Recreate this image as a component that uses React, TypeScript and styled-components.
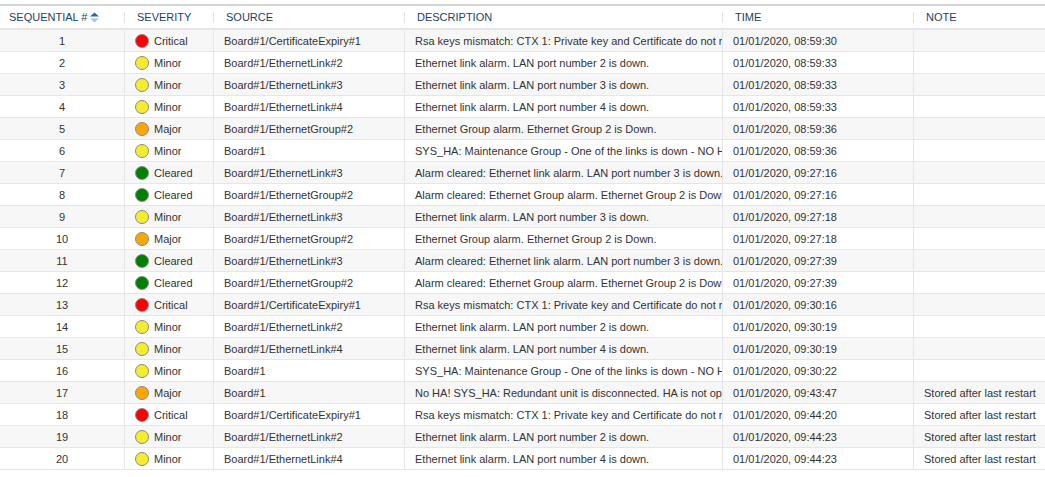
import React from "react";
import styled, { createGlobalStyle } from "styled-components";

const Global = createGlobalStyle`
  html, body { margin: 0; padding: 0; background: #fff; }
  body { font-family: "Liberation Sans", Arial, sans-serif; }
`;

type Sev = "Critical" | "Minor" | "Major" | "Cleared";

const sevColor: Record<Sev, string> = {
  Critical: "#ff0000",
  Minor: "#f5ec2e",
  Major: "#ffa500",
  Cleared: "#008000",
};

const rows: [number, Sev, string, string, string, string][] = [
  [1, "Critical", "Board#1/CertificateExpiry#1", "Rsa keys mismatch: CTX 1: Private key and Certificate do not match", "01/01/2020, 08:59:30", ""],
  [2, "Minor", "Board#1/EthernetLink#2", "Ethernet link alarm. LAN port number 2 is down.", "01/01/2020, 08:59:33", ""],
  [3, "Minor", "Board#1/EthernetLink#3", "Ethernet link alarm. LAN port number 3 is down.", "01/01/2020, 08:59:33", ""],
  [4, "Minor", "Board#1/EthernetLink#4", "Ethernet link alarm. LAN port number 4 is down.", "01/01/2020, 08:59:33", ""],
  [5, "Major", "Board#1/EthernetGroup#2", "Ethernet Group alarm. Ethernet Group 2 is Down.", "01/01/2020, 08:59:36", ""],
  [6, "Minor", "Board#1", "SYS_HA: Maintenance Group - One of the links is down - NO HA", "01/01/2020, 08:59:36", ""],
  [7, "Cleared", "Board#1/EthernetLink#3", "Alarm cleared: Ethernet link alarm. LAN port number 3 is down.", "01/01/2020, 09:27:16", ""],
  [8, "Cleared", "Board#1/EthernetGroup#2", "Alarm cleared: Ethernet Group alarm. Ethernet Group 2 is Down.", "01/01/2020, 09:27:16", ""],
  [9, "Minor", "Board#1/EthernetLink#3", "Ethernet link alarm. LAN port number 3 is down.", "01/01/2020, 09:27:18", ""],
  [10, "Major", "Board#1/EthernetGroup#2", "Ethernet Group alarm. Ethernet Group 2 is Down.", "01/01/2020, 09:27:18", ""],
  [11, "Cleared", "Board#1/EthernetLink#3", "Alarm cleared: Ethernet link alarm. LAN port number 3 is down.", "01/01/2020, 09:27:39", ""],
  [12, "Cleared", "Board#1/EthernetGroup#2", "Alarm cleared: Ethernet Group alarm. Ethernet Group 2 is Down.", "01/01/2020, 09:27:39", ""],
  [13, "Critical", "Board#1/CertificateExpiry#1", "Rsa keys mismatch: CTX 1: Private key and Certificate do not match", "01/01/2020, 09:30:16", ""],
  [14, "Minor", "Board#1/EthernetLink#2", "Ethernet link alarm. LAN port number 2 is down.", "01/01/2020, 09:30:19", ""],
  [15, "Minor", "Board#1/EthernetLink#4", "Ethernet link alarm. LAN port number 4 is down.", "01/01/2020, 09:30:19", ""],
  [16, "Minor", "Board#1", "SYS_HA: Maintenance Group - One of the links is down - NO HA", "01/01/2020, 09:30:22", ""],
  [17, "Major", "Board#1", "No HA! SYS_HA: Redundant unit is disconnected. HA is not operational", "01/01/2020, 09:43:47", "Stored after last restart"],
  [18, "Critical", "Board#1/CertificateExpiry#1", "Rsa keys mismatch: CTX 1: Private key and Certificate do not match", "01/01/2020, 09:44:20", "Stored after last restart"],
  [19, "Minor", "Board#1/EthernetLink#2", "Ethernet link alarm. LAN port number 2 is down.", "01/01/2020, 09:44:23", "Stored after last restart"],
  [20, "Minor", "Board#1/EthernetLink#4", "Ethernet link alarm. LAN port number 4 is down.", "01/01/2020, 09:44:23", "Stored after last restart"],
];

const COLS = "125px 89px 191px 318px 191px 131px";

const Wrapper = styled.div`
  padding-top: 4px;
  width: 1045px;
  overflow: hidden;
`;

const Table = styled.div`
  border-top: 2px solid #d4d4d4;
`;

const HeaderRow = styled.div`
  display: grid;
  grid-template-columns: ${COLS};
  height: 22px;
  border-bottom: 2px solid #e6e6e6;
  background: #fff;
`;

const HeaderCell = styled.div<{ $last?: boolean }>`
  position: relative;
  display: flex;
  align-items: center;
  padding-left: 12px;
  font-size: 11px;
  color: #1d3f62;
  white-space: nowrap;
  &::after {
    content: "";
    display: ${(p) => (p.$last ? "none" : "block")};
    position: absolute;
    right: 0;
    top: 6px;
    height: 11px;
    width: 1px;
    background: #e3e3e3;
  }
`;

const FirstHeader = styled(HeaderCell)`
  padding-left: 9px;
`;

const SortIcon = styled.svg`
  margin-left: 3px;
  margin-top: 1px;
`;

const Row = styled.div<{ $odd: boolean }>`
  display: grid;
  grid-template-columns: ${COLS};
  height: 21px;
  border-bottom: 1px solid #e6e6e6;
  background: ${(p) => (p.$odd ? "#f7f7f7" : "#ffffff")};
`;

const Cell = styled.div<{ $center?: boolean; $last?: boolean }>`
  display: flex;
  align-items: center;
  justify-content: ${(p) => (p.$center ? "center" : "flex-start")};
  padding-left: ${(p) => (p.$center ? "0" : "10px")};
  padding-top: 1px;
  border-right: ${(p) => (p.$last ? "none" : "1px solid #e6e6e6")};
  font-size: 11px;
  color: #333;
  white-space: nowrap;
  overflow: hidden;
  min-width: 0;
`;

const Dot = styled.span<{ $color: string }>`
  display: inline-block;
  flex: none;
  width: 12px;
  height: 12px;
  border-radius: 50%;
  background: ${(p) => p.$color};
  border: 1px solid #8a8a8a;
  margin-right: 5px;
  margin-top: -1px;
`;

export default function App() {
  return (
    <Wrapper>
      <Global />
      <Table>
        <HeaderRow>
          <FirstHeader>
            SEQUENTIAL #
            <SortIcon width="9" height="11" viewBox="0 0 9 11">
              <polygon points="4.5,0.5 9,4.5 0,4.5" fill="#2a6aa0" />
              <polygon points="0,6.5 9,6.5 4.5,10.5" fill="#a9c6df" />
            </SortIcon>
          </FirstHeader>
          <HeaderCell>SEVERITY</HeaderCell>
          <HeaderCell>SOURCE</HeaderCell>
          <HeaderCell>DESCRIPTION</HeaderCell>
          <HeaderCell>TIME</HeaderCell>
          <HeaderCell $last>NOTE</HeaderCell>
        </HeaderRow>
        {rows.map(([n, sev, src, desc, time, note]) => (
          <Row key={n} $odd={n % 2 === 1}>
            <Cell $center>{n}</Cell>
            <Cell>
              <Dot $color={sevColor[sev]} />
              {sev}
            </Cell>
            <Cell>{src}</Cell>
            <Cell>{desc}</Cell>
            <Cell>{time}</Cell>
            <Cell $last>{note}</Cell>
          </Row>
        ))}
      </Table>
    </Wrapper>
  );
}
